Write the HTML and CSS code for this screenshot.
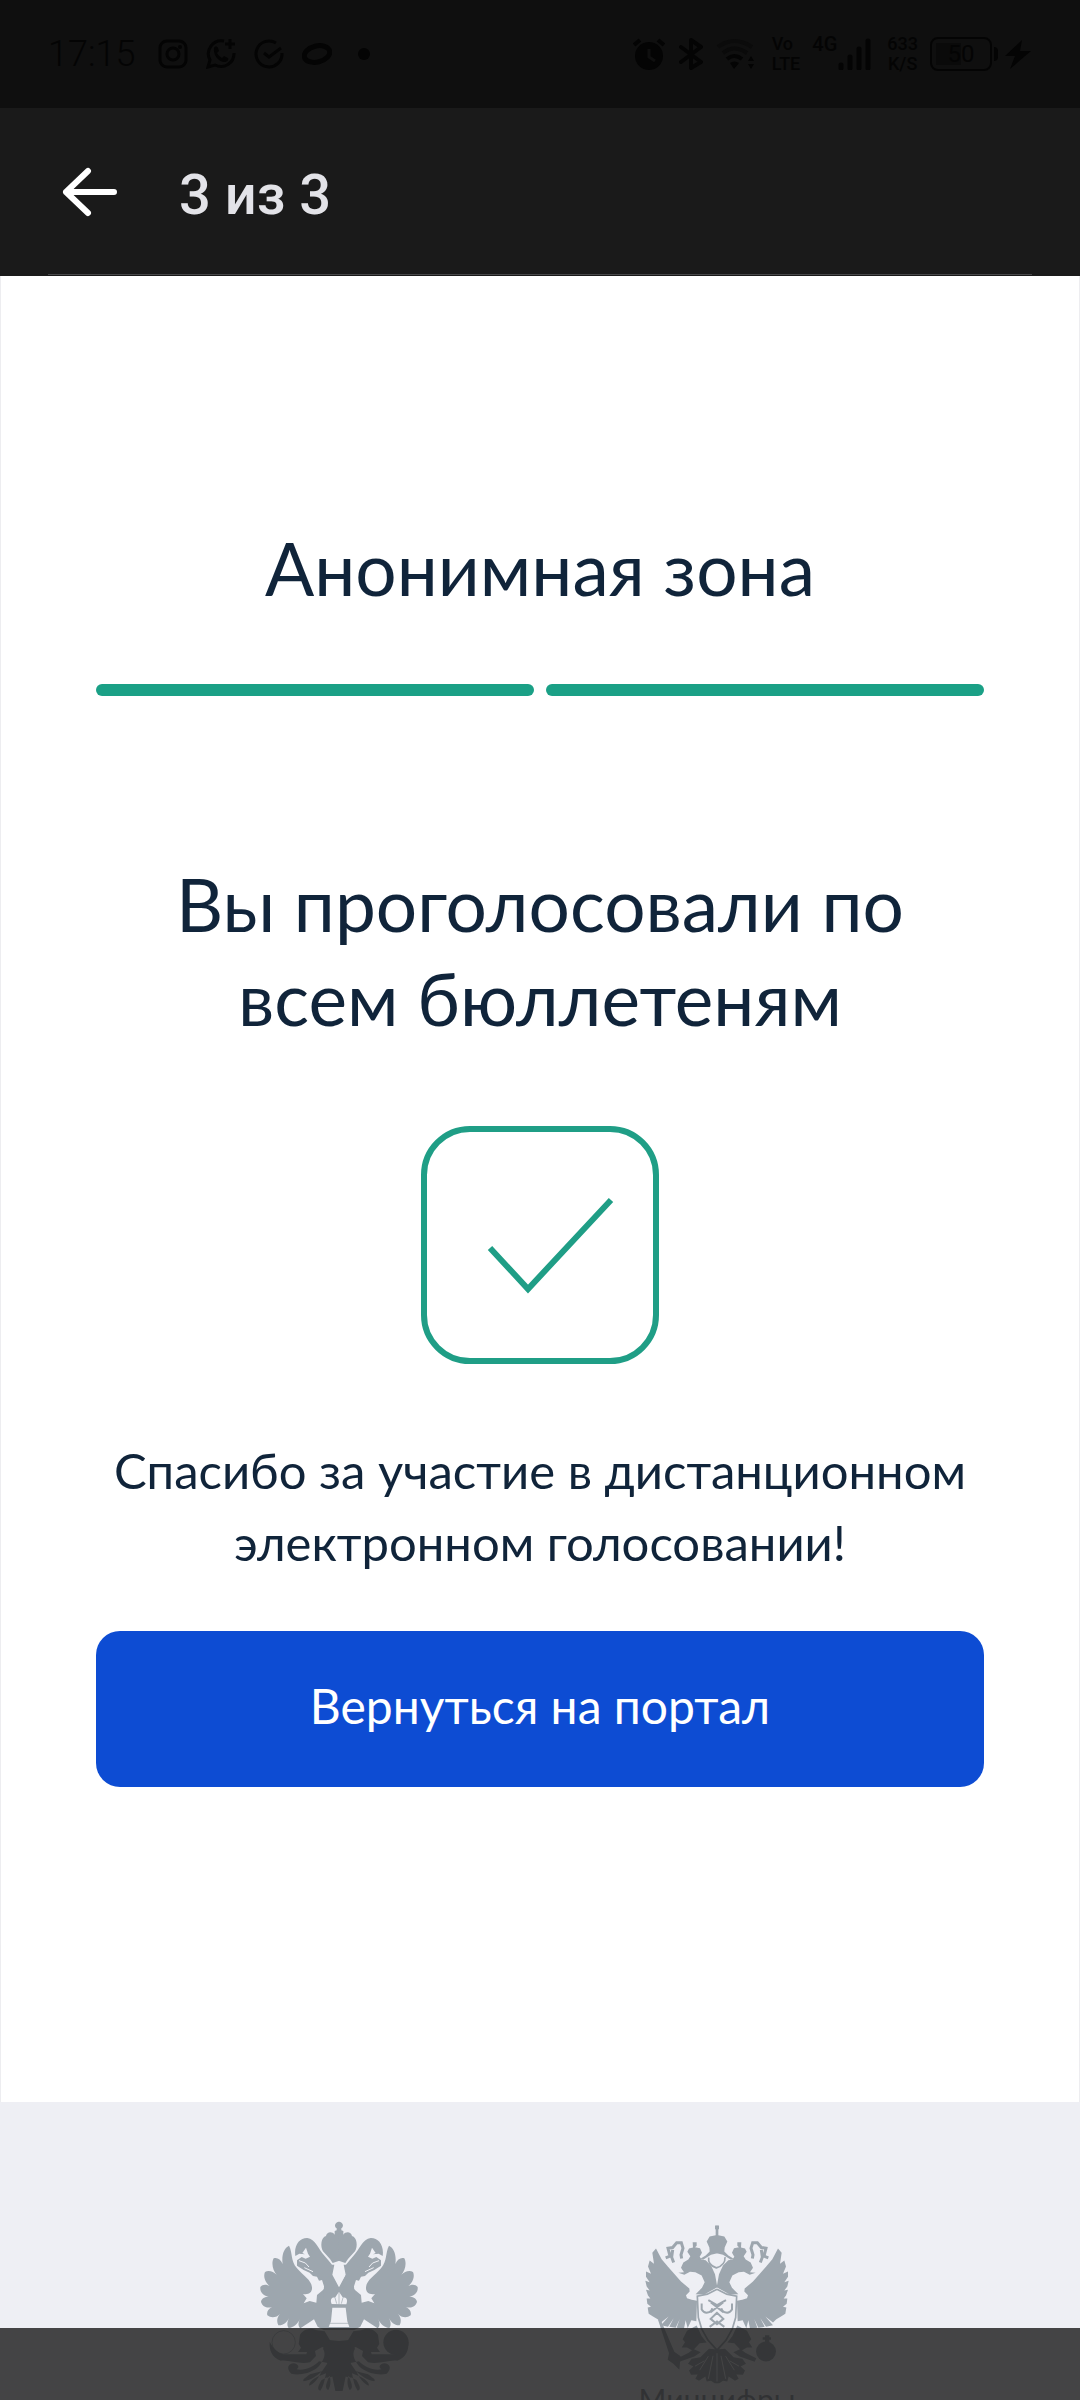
FILE: index.html
```html
<!DOCTYPE html>
<html lang="ru">
<head>
  <meta charset="UTF-8">
  <meta name="viewport" content="width=device-width, initial-scale=1.0">
  <title>Анонимная зона</title>
  <link rel="stylesheet" href="styles.css">
</head>
<body>

  <!-- Status bar -->
  <div class="status-bar">
    <div class="status-left">
      <span class="time">17:15</span>
      <svg class="icon-app" viewBox="0 0 30 30">
        <rect x="2" y="2" width="26" height="26" rx="7" fill="none" stroke="currentColor" stroke-width="3"/>
        <circle cx="15" cy="15" r="6" fill="none" stroke="currentColor" stroke-width="3"/>
        <circle cx="22" cy="8" r="2" fill="currentColor"/>
      </svg>
      <svg class="icon-app" viewBox="0 0 30 30">
        <path d="M18 2A13 13 0 0 0 4 21L2 28L9 26A13 13 0 0 0 28 14" fill="none" stroke="currentColor" stroke-width="3"/>
        <path d="M24 0V10M19 5H29" stroke="currentColor" stroke-width="3"/>
        <path d="M8 9C9 7 11 7 12 9L13 12L11 14C12 16 14 18 16 19L18 17L22 19C23 21 21 23 18 23C12 22 7 16 8 9Z" fill="currentColor"/>
      </svg>
      <svg class="icon-app" viewBox="0 0 30 30">
        <path d="M22 4A13 13 0 1 0 28 14M10 14L15 18L27 9" fill="none" stroke="currentColor" stroke-width="3"/>
      </svg>
      <svg class="icon-app" viewBox="0 0 30 30">
        <ellipse cx="15" cy="15" rx="13" ry="8" transform="rotate(-14 15 15)" fill="none" stroke="currentColor" stroke-width="5"/>
      </svg>
      <span class="more-dot"></span>
    </div>

    <div class="status-right">
      <svg class="icon-alarm" viewBox="0 0 32 32">
        <circle cx="16" cy="18" r="14" fill="currentColor"/>
        <path d="M1 7L7 2M31 7L25 2" stroke="currentColor" stroke-width="4"/>
        <path d="M16 11V19L22 23" fill="none" stroke="#0f0f0f" stroke-width="3"/>
      </svg>
      <svg class="icon-bluetooth" viewBox="0 0 24 32">
        <path d="M2 9L22 24L12 30V2L22 9L2 24" fill="none" stroke="currentColor" stroke-width="4" stroke-linejoin="round" stroke-linecap="round"/>
      </svg>
      <svg class="icon-wifi" viewBox="0 0 40 32">
        <g fill="none" stroke-width="4">
          <path d="M2 9Q18 -3 36 9" stroke="#0b0b0b"/>
          <path d="M7 15Q18 6 31 15" stroke="#0a0a0a"/>
          <path d="M11 21Q18 15 26 21" stroke="currentColor"/>
        </g>
        <path d="M14 25Q18 22 23 25L18 31ZM35 18L38 23H32ZM35 31L38 26H32Z" fill="currentColor"/>
      </svg>
      <span class="two-lines"><span>Vo</span><span>LTE</span></span>
      <span class="network">4G</span>
      <svg class="icon-signal" viewBox="0 0 34 32">
        <path d="M4 27V30M13 19V30M22 11V30M31 3V30" stroke="currentColor" stroke-width="5" stroke-linecap="round"/>
      </svg>
      <span class="two-lines speed"><span>633</span><span>K/S</span></span>
      <span class="battery"><span class="battery-value">50</span></span>
      <span class="battery-nub"></span>
      <svg class="icon-bolt" viewBox="0 0 28 32">
        <path d="M18 2L1 18H11L6 31L27 13H16Z" fill="currentColor"/>
      </svg>
    </div>
  </div>

  <!-- Viewer header -->
  <header class="header">
    <button class="back" aria-label="Назад">
      <svg viewBox="0 0 56 50">
        <path d="M52 25H4M26 4L4 25L26 46" fill="none" stroke="currentColor" stroke-width="6" stroke-linecap="round" stroke-linejoin="round"/>
      </svg>
    </button>
    <span class="counter">3 из 3</span>
  </header>

  <main class="content">
    <h1 class="title">Анонимная зона</h1>

    <div class="steps">
      <span class="step"></span>
      <span class="step"></span>
    </div>

    <h2 class="title result">Вы проголосовали по всем бюллетеням</h2>

    <svg class="done" viewBox="0 0 238 238">
      <rect x="3" y="3" width="232" height="232" rx="46"/>
      <path d="M69 122L107 163L190 74"/>
    </svg>

    <p class="thanks">Спасибо за участие в дистанционном электронном голосовании!</p>

    <button class="portal-button">Вернуться на портал</button>
  </main>

  <footer class="footer">
    <div class="emblem">
      <svg class="eagle" viewBox="178 123 480 516">
        <defs>
          <g id="eagle-half">
            <!-- wing -->
            <path d="M268 197C253 204 245 226 249 252C243 238 232 231 222 235C214 250 220 272 231 284C221 274 206 269 196 276C189 292 199 310 211 319C202 313 189 312 182 321C180 338 193 347 207 350C196 350 185 355 184 366C189 382 204 385 217 381C207 386 200 394 203 406C215 416 232 412 241 402C232 411 230 425 236 436C251 437 262 426 269 413C261 426 262 438 267 444C282 443 294 432 300 418C294 430 296 440 302 445L325 430L343 418L354 440L372 450H420V335L395 300L370 330L352 345L350 368L330 363L312 370L321 355L310 342C328 345 338 337 337 322C335 300 310 286 292 265C272 241 280 220 268 197Z"/>
            <!-- head and neck -->
            <path d="M287 228C282 194 301 173 323 174C347 177 356 207 375 228L386 241L397 254H404L398 284L418 322V360H370L373 319L367 300L358 302L352 290L340 288L330 278L312 270L292 257L292 241L306 231L318 236L331 230L325 221L319 203L308 219L316 223L299 221Z"/>
            <!-- crown -->
            <path d="M419 125C404 126 403 141 411 145V151L405 153V164C398 154 382 154 379 168C364 172 361 199 370 214L383 228L391 237L399 249L419 242Z"/>
            <!-- leg and orb arm -->
            <path d="M301 464C311 446 336 441 352 451L375 454L396 489L389 513L368 501L346 513L349 528L331 547C296 554 266 538 243 542C216 532 208 509 210 485C222 508 240 523 257 523H320L322 516H295L304 503L297 492Z"/>
            <!-- tail -->
            <path d="M419 483L388 480L370 506C382 523 369 548 352 564C328 582 294 587 275 581C258 566 266 550 282 550C294 551 302 561 291 568C315 573 342 560 358 544L384 549L367 574C350 588 333 602 312 604C307 599 316 594 331 583L366 574C357 595 344 611 329 617C325 607 344 596 352 591L379 580C375 602 371 620 362 632C347 629 362 607 366 600L390 588C394 605 394 615 386 630C372 624 383 604 387 593L419 583Z"/>
          </g>
        </defs>
        <use href="#eagle-half"/>
        <use href="#eagle-half" transform="translate(836 0) scale(-1 1)"/>
        <path d="M383 484H453V595L440 580L429 633H407L396 580L383 595Z"/>
        <circle cx="589" cy="487" r="38"/>
        <circle cx="252" cy="487" r="35" class="thin"/>
        <g class="cut">
          <path d="M418 251L435 288L418 318L402 288Z"/>
          <path d="M398 383H438L443 424L449 441H387L394 424Z"/>
          <path d="M396 372C390 358 397 350 406 353L418 335L430 353C441 350 445 360 440 373Z"/>
        </g>
        <path class="thin" d="M397 379H439M406 353L411 371M430 353L425 371M418 334V372M386 430H450"/>
        <path class="line" d="M380 453L405 470L418 455L432 470L456 453M397 454L418 478L440 454"/>
        <path class="line" d="M298 242L317 249L328 261M314 263L340 275M538 242L519 249L508 261M522 263L496 275"/>
      </svg>
    </div>
    <div class="emblem">
      <svg class="eagle-small" viewBox="136 135 432 476">
        <defs>
          <g id="ministry-half">
            <!-- wing -->
            <path d="M169 205L158 218L163 251L150 241L145 259L154 281L139 274L139 290L150 306L137 302L141 319L150 331L139 329L145 346L152 355L141 355L143 371L154 380L144 382L147 401L160 409L174 417L184 427L207 409L184 435L205 440L222 414L209 440L228 443L240 417L231 443L253 445L258 420L264 444L275 420L290 423L292 362L276 359L262 354L259 345L270 334L269 325L244 304L205 260L186 237Z"/>
            <!-- ribbon -->
            <path class="ribbon" d="M198 233L211 228L205 204L219 202L231 188L245 188L250 204L244 224L246 235M219 209L216 231L222 247"/>
            <!-- head, small crown, neck -->
            <path d="M279 186H291V197L286 201L301 204L307 218L300 230L306 238L318 240L334 256L346 282L353 321L334 332L314 343L288 342L307 323L315 306L306 286L287 276L271 275L254 284L236 278L253 276L244 263L251 247L266 238L272 228L263 215L268 205L280 202Z"/>
            <!-- main crown -->
            <path d="M353 136H346V147H353M353 138H348V165L330 169L321 184L329 202L330 214L318 226L303 235L310 239L334 224L353 219Z"/>
            <!-- shield edge -->
            <path class="edge" d="M352 327L323 342L293 348L296 412L306 446L325 480L352 510"/>
            <!-- leg -->
            <path d="M291 436L306 468L321 487L300 489L283 507L303 516L284 529L239 545L234 534L267 518L277 510L262 502H246L256 486L249 477L262 452Z"/>
            <!-- tail -->
            <path d="M353 508L328 506L302 531L276 536L265 551L281 559L268 571L274 584L294 583L287 596L298 602L317 589L321 604L334 602L345 609H353Z"/>
          </g>
        </defs>
        <use href="#ministry-half"/>
        <use href="#ministry-half" transform="translate(704 0) scale(-1 1)"/>
        <path d="M175 419L184 421L224 515L243 528L239 569L221 551L204 539L208 519Z"/>
        <circle cx="499" cy="514" r="30"/>
        <path d="M496 465H509V488H496ZM489 471H514V479H489Z"/>
        <path class="edge" d="M327 232C325 246 331 257 350 263C371 257 377 245 376 231"/>
        <path class="ribbon charge" d="M306 370V388C315 403 334 399 338 384M397 370V388C388 403 369 399 365 384M326 360L352 375L379 360M333 366L371 396M371 366L333 396M352 398L333 416L352 432L371 416ZM330 440L352 424L374 440"/>
        <path class="line" d="M352 519V604M340 527L326 596M364 527L378 596M326 528L300 570M378 528L404 570M314 542L286 558M390 542L418 558"/>
      </svg>
      <span class="emblem-name">Минцифры</span>
    </div>
  </footer>

  <div class="bottom-bar"></div>

</body>
</html>
```
FILE: styles.css
```css
/* Global Styles */
* {
  box-sizing: border-box;
}

body {
  margin: 0;
  height: 100vh;
  overflow: hidden;
  display: flex;
  flex-direction: column;
  font-family: Lato, sans-serif;
  color: #10243a;
  background-color: #fff;
}

h1, h2, p {
  margin: 0;
}

button {
  border: none;
  padding: 0;
  font-family: inherit;
  cursor: pointer;
}

svg {
  display: block;
  flex-shrink: 0;
}

/* Status bar */
.status-bar {
  height: 108px;
  flex-shrink: 0;
  display: flex;
  justify-content: space-between;
  align-items: center;
  padding: 0 48px;
  font-family: Roboto, sans-serif;
  color: #040404;
  background-color: #0f0f0f;
}

.status-left,
.status-right {
  display: flex;
  align-items: center;
}

.status-left {
  gap: 18px;
}

.time {
  font-size: 36px;
  font-weight: 300;
  line-height: 40px;
  margin-right: 5px;
}

.icon-app {
  width: 30px;
  height: 30px;
}

.more-dot {
  width: 12px;
  height: 12px;
  margin-left: 8px;
  border-radius: 50%;
  background-color: currentColor;
}

.icon-alarm {
  width: 32px;
  height: 32px;
}

.icon-bluetooth {
  width: 24px;
  height: 32px;
  margin-left: 14px;
}

.icon-wifi {
  width: 40px;
  height: 32px;
  margin-left: 13px;
}

.two-lines {
  display: flex;
  flex-direction: column;
  margin-left: 16px;
  font-size: 18px;
  font-weight: 500;
  line-height: 20px;
}

.network {
  align-self: flex-start;
  margin-left: 12px;
  font-size: 20px;
  font-weight: 500;
  line-height: 20px;
}

.icon-signal {
  width: 34px;
  height: 32px;
}

.speed {
  text-align: center;
}

.battery {
  width: 62px;
  height: 34px;
  margin-left: 12px;
  border: 2px solid currentColor;
  border-radius: 8px;
  background: linear-gradient(#0a0a0a, #0a0a0a) 4px 4px / 25px 22px no-repeat;
  text-align: center;
}

.battery-value {
  font-size: 24px;
  line-height: 30px;
}

.battery-nub {
  width: 4px;
  height: 14px;
  margin-left: 2px;
  border-radius: 0 4px 4px 0;
  background-color: currentColor;
}

.icon-bolt {
  width: 28px;
  height: 32px;
  margin-left: 6px;
}

/* Viewer header */
.header {
  position: relative;
  height: 168px;
  flex-shrink: 0;
  display: flex;
  align-items: center;
  gap: 61px;
  padding: 0 62px;
  color: #e3e3e8;
  background-color: #1a1a1a;
}

.header::after {
  content: "";
  position: absolute;
  left: 48px;
  right: 48px;
  bottom: 1px;
  height: 1px;
  background-color: #48484a;
}

.back {
  color: #fff;
  background: none;
}

.back svg {
  width: 56px;
  height: 50px;
}

.counter {
  padding-top: 6px;
  font-family: Roboto, sans-serif;
  font-size: 56px;
  font-weight: 500;
  line-height: 64px;
}

/* Page content */
.content {
  flex-shrink: 0;
  display: flex;
  flex-direction: column;
  align-items: center;
  padding: 245px 95px 315px;
  border: solid #ededf0;
  border-width: 0 1px;
  text-align: center;
}

.title {
  font-size: 73px;
  font-weight: 400;
  line-height: 94px;
}

.steps {
  width: 100%;
  display: flex;
  gap: 12px;
  margin-top: 69px;
}

.step {
  flex: 1;
  height: 12px;
  border-radius: 6px;
  background-color: #1aa086;
}

.result {
  max-width: 800px;
  margin-top: 161px;
}

.done {
  width: 238px;
  height: 238px;
  margin-top: 81px;
  fill: none;
  stroke: #1f9e86;
  stroke-width: 6;
}

.thanks {
  margin-top: 70px;
  font-size: 49px;
  line-height: 72px;
}

.portal-button {
  width: 100%;
  margin-top: 53px;
  padding: 39px 24px 45px;
  border-radius: 24px;
  font-size: 48px;
  line-height: 72px;
  color: #fff;
  background-color: #0d4cd3;
}

/* Footer */
.footer {
  flex: 1 0 auto;
  display: grid;
  grid-template-columns: 1fr 1fr;
  padding: 119px 174px 0 150px;
  background-color: #eeeff4;
}

.emblem {
  display: flex;
  flex-direction: column;
  align-items: center;
  color: #9da6ae;
}

.emblem svg {
  fill: currentColor;
}

.eagle {
  width: 160px;
  height: 172px;
}

.eagle-small {
  width: 144px;
  height: 159px;
  margin-top: 4px;
}

.emblem svg .cut {
  fill: #eeeff4;
}

.emblem svg .line {
  fill: none;
  stroke: #eeeff4;
  stroke-width: 3;
}

.thin {
  fill: none;
  stroke: currentColor;
  stroke-width: 2;
}

.ribbon {
  fill: none;
  stroke: currentColor;
  stroke-width: 9;
}

.charge {
  stroke-width: 6;
}

.edge {
  fill: none;
  stroke: currentColor;
  stroke-width: 5;
}

.emblem-name {
  font-size: 30px;
  line-height: 30px;
  color: #8a929b;
}

/* Translucent bar over the bottom of the page */
.bottom-bar {
  position: fixed;
  left: 0;
  right: 0;
  bottom: 0;
  height: 72px;
  background-color: rgba(28, 28, 28, 0.81);
}
```
